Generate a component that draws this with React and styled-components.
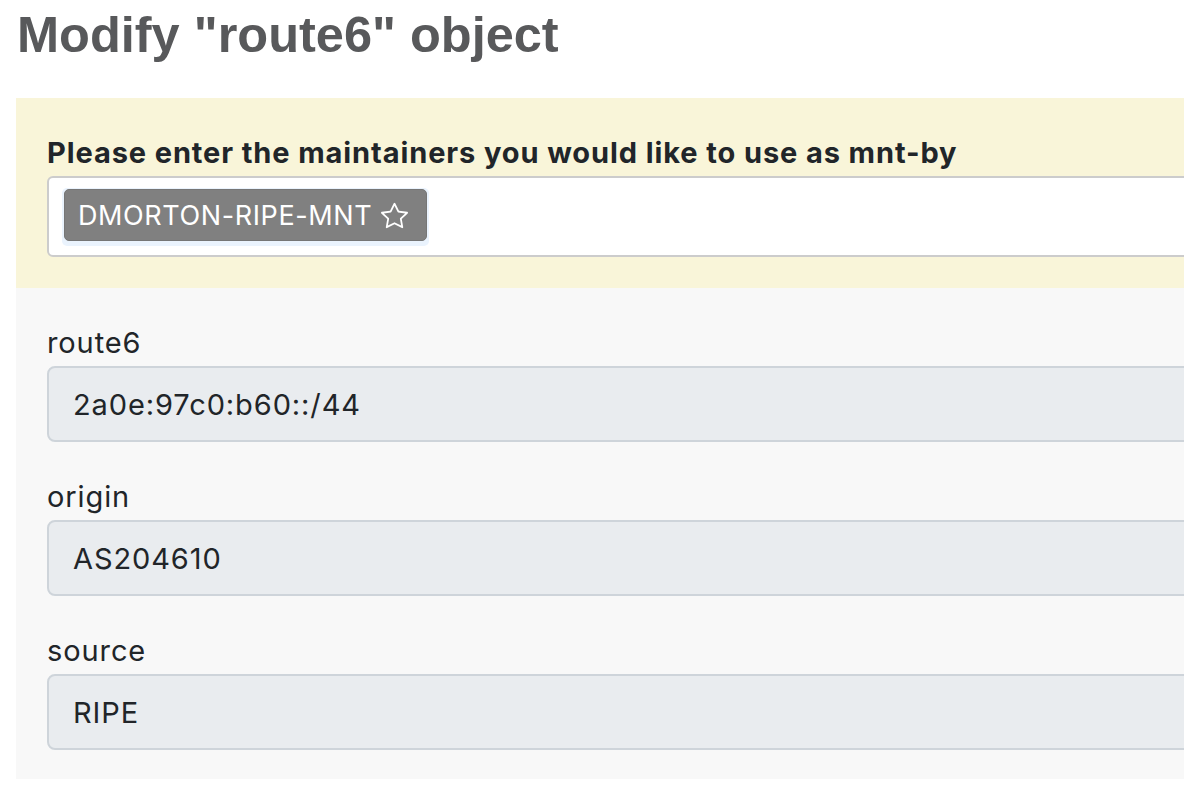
import React from "react";
import styled, { createGlobalStyle } from "styled-components";
import { BsStar } from "react-icons/bs";

const Global = createGlobalStyle`
  html, body { margin: 0; padding: 0; background: #ffffff; overflow: hidden; }
  body { font-family: Inter, "Noto Sans", "Liberation Sans", sans-serif; color: #212529; }
`;

const Page = styled.div`
  width: 1500px;
  padding: 5px 0 0 16px;
  box-sizing: border-box;
`;

const Title = styled.h1`
  margin: 0 0 33px 1px;
  font-family: "Liberation Sans", Arial, sans-serif;
  font-weight: 700;
  font-size: 50.5px;
  line-height: 60px;
  color: #58595b;
`;

const Panel = styled.section`
  background: ${(p) => (p.$tone === "warn" ? "#f9f5d9" : "#f8f8f8")};
  padding: 34px 31px ${(p) => p.$bottom}px 31px;
  display: flex;
  flex-direction: column;
  gap: 34px;
`;

const Field = styled.div`
  display: flex;
  flex-direction: column;
`;

const Label = styled.label`
  font-size: 29px;
  letter-spacing: 0.9px;
  line-height: 42px;
  font-weight: ${(p) => (p.$strong ? 700 : 400)};
  color: #212529;
  margin-bottom: 2px;
`;

const MntBox = styled.div`
  height: 81px;
  box-sizing: border-box;
  border: 2px solid #cccccc;
  border-radius: 6px;
  background: #ffffff;
  padding: 10px 13px;
  display: flex;
  align-items: flex-start;
`;

const ChipWrap = styled.div`
  background: #eaf3fd;
  border-radius: 5px;
  padding: 1px 2px 5px 2px;
`;

const Chip = styled.span`
  display: inline-flex;
  align-items: center;
  gap: 9px;
  height: 52px;
  box-sizing: border-box;
  padding: 0 18px 0 13px;
  background: #808080;
  border: 1px solid #767676;
  border-radius: 5px;
  color: #ffffff;
  font-size: 27px;
  letter-spacing: 0.6px;
  line-height: 1;
`;

const Input = styled.div`
  height: 76px;
  box-sizing: border-box;
  border: 2px solid #ced4da;
  border-radius: 8px;
  background: #e9ecef;
  padding: 0 24px;
  display: flex;
  align-items: center;
  font-size: 29px;
  letter-spacing: 0.9px;
  color: #212529;
`;

const fields = [
  { name: "route6", value: "2a0e:97c0:b60::/44" },
  { name: "origin", value: "AS204610" },
  { name: "source", value: "RIPE" },
];

export default function App() {
  return (
    <>
      <Global />
      <Page>
        <Title>Modify "route6" object</Title>
        <Panel $tone="warn" $bottom={31}>
          <Field>
            <Label $strong>Please enter the maintainers you would like to use as mnt-by</Label>
            <MntBox>
              <ChipWrap>
                <Chip>
                  DMORTON-RIPE-MNT
                  <BsStar size={27} />
                </Chip>
              </ChipWrap>
            </MntBox>
          </Field>
        </Panel>
        <Panel $bottom={29}>
          {fields.map((f) => (
            <Field key={f.name}>
              <Label>{f.name}</Label>
              <Input>{f.value}</Input>
            </Field>
          ))}
        </Panel>
      </Page>
    </>
  );
}
